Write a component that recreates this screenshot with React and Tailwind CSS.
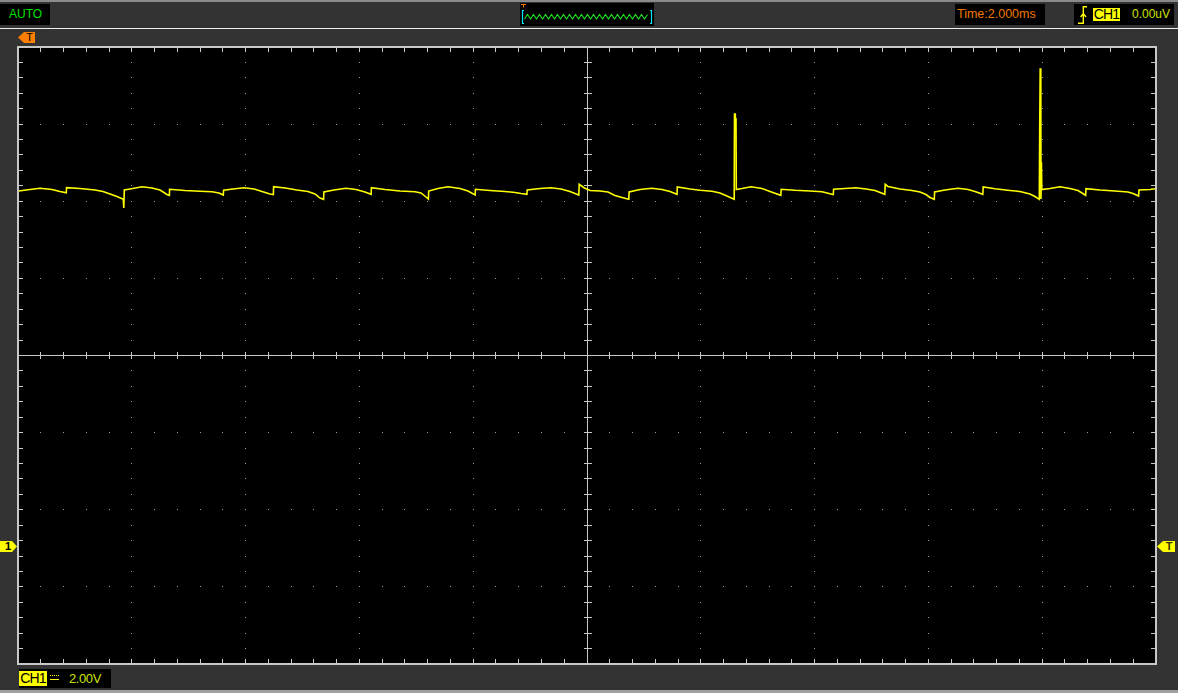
const X0 = 18;
const X1 = 1156;
const Y0 = 47;
const Y1 = 664;
const DX = (X1 - X0) / 10;
const DY = (Y1 - Y0) / 8;
const CX = 587.5;
const CY = 355.5;
const snap = (v) => Math.floor(v) + 0.5;

function buildGrid() {
  let dots = "";
  let ticks = "";
  for (let i = 1; i < 50; i++) {
    const x = snap(X0 + (i * DX) / 5);
    ticks += `M${x} 48v4M${x} 663v-4M${x} ${CY - 3.5}v7`;
    for (let k = 1; k < 8; k++) {
      if (k === 4) continue;
      const y = Math.floor(Y0 + k * DY);
      dots += `M${x - 0.5} ${y}h1v1h-1z`;
    }
  }
  for (let j = 1; j < 40; j++) {
    const y = snap(Y0 + (j * DY) / 5);
    ticks += `M19 ${y}h4M1155 ${y}h-4M${CX - 4} ${y}h8`;
    for (let k = 1; k < 10; k++) {
      if (k === 5) continue;
      const x = Math.floor(X0 + k * DX);
      dots += `M${x} ${y - 0.5}h1v1h-1z`;
    }
  }
  return { dots, ticks };
}

const grid = buildGrid();

// channel 1 trace, page coordinates
const trace = [
  [19, 191], [26, 190], [40, 188.3], [52, 189.5], [60, 191.5], [66.3, 192.7], [66.5, 187.7],
  [80, 188.5], [95, 190], [103, 191.5], [110, 194], [117, 196.5], [123.3, 199.3], [123.8, 208],
  [124.3, 190], [130, 189], [142, 186.7], [152, 188], [160, 190], [167, 194.5], [169.4, 195.3],
  [169.6, 189.3], [185, 190.5], [200, 191.3], [212, 191.8], [219, 193], [223.3, 195], [223.6, 190.3],
  [233, 189], [244, 187.7], [254, 189], [262, 191.5], [270, 194], [273.4, 194.5], [273.6, 186.7],
  [285, 188], [297, 190], [308, 191.5], [315, 194], [320, 198], [323.6, 199.3], [323.9, 192],
  [334, 190], [346, 188.3], [356, 189.5], [365, 192], [371.1, 194.3], [371.4, 187.7], [385, 189.5],
  [400, 191], [415, 191.8], [421, 193], [426, 197], [428.4, 199], [428.7, 191], [438, 188.5],
  [448, 186.7], [460, 188.5], [468, 191], [475.1, 195], [475.4, 189.3], [490, 190.5], [505, 191.5],
  [515, 192.5], [521, 193.5], [526.9, 194.3], [527.2, 190], [540, 188.5], [551, 187.7], [561, 189],
  [570, 191.5], [578.8, 195], [579.2, 184.3], [584, 187.7], [590, 190.5], [600, 191], [608, 192],
  [615, 195.5], [622, 197.5], [628.8, 199.3], [629.1, 192], [640, 189.5], [651.7, 188.3], [662, 189.5],
  [670, 191.5], [677, 194.3], [677.3, 187], [690, 189], [700, 190.2], [712, 191.3], [720, 193],
  [728, 196.5], [734.2, 199.3], [734.5, 114], [735.3, 114], [735.6, 126], [736, 118], [736.3, 189.5],
  [742, 188.5], [751, 186.7], [762, 188.5], [770, 191.5], [780.8, 195.3], [781.2, 189.3], [795, 190.3],
  [810, 191], [822, 191.8], [832, 194.3], [833.3, 194.5], [833.6, 189.3], [845, 188.5], [856, 187.7],
  [866, 189], [875, 190.5], [884.8, 194.3], [885.2, 184.3], [888, 186.5], [900, 189], [912, 190.5],
  [920, 192], [926, 194.5], [930, 197.5], [934.3, 199.3], [934.6, 192], [945, 190], [958, 188.3],
  [968, 189.5], [975, 191.5], [982.8, 194.3], [983.2, 187], [995, 188.8], [1010, 190.5], [1020, 191.5],
  [1030, 194], [1035, 196.5], [1039.3, 199.3], [1039.7, 130], [1040.2, 69], [1040.8, 69], [1041, 199],
  [1041.4, 162], [1041.8, 189.5], [1050, 188.5], [1060, 186.7], [1070, 188.5], [1078, 190.5],
  [1085.6, 195.3], [1086, 188.7], [1100, 190], [1115, 191], [1128, 192], [1133, 193.5], [1138.6, 196],
  [1139, 190], [1150, 189.5], [1155, 188.7],
];

const zigzag = (() => {
  const pts = [];
  for (let x = 4.5, n = 0; x <= 129; x += 3, n++) {
    pts.push(`${x},${n % 2 === 0 ? 16 : 11.5}`);
  }
  return pts.join(" ");
})();

function WaveThumb() {
  return (
    <svg width="134" height="23" viewBox="0 0 134 23">
      <path d="M1 1.5h5M3.5 1.5v3" stroke="#ff8000" strokeWidth="1" fill="none" />
      <path d="M4 7.5H2.5V20.5H4M130 7.5H131.5V20.5H130" stroke="#00e8ff" strokeWidth="1.2" fill="none" />
      <polyline points={zigzag} stroke="#22e022" strokeWidth="1.1" fill="none" />
    </svg>
  );
}

function Scope() {
  return (
    <svg width="1141" height="620" viewBox="17 46 1141 620" className="block shrink-0">
      <rect x="18" y="47" width="1138" height="617" fill="#000" stroke="#c8c8c8" strokeWidth="2" />
      <path d={grid.dots} fill="#9c9c9c" shapeRendering="crispEdges" />
      <path
        d={`M${CX} 48V663M19 ${CY}H1155`}
        stroke="#c8c8c8"
        strokeWidth="1"
        fill="none"
        shapeRendering="crispEdges"
      />
      <path d={grid.ticks} stroke="#c8c8c8" strokeWidth="1" fill="none" shapeRendering="crispEdges" />
      <polyline
        points={trace.map((p) => p.join(",")).join(" ")}
        fill="none"
        stroke="#ffff00"
        strokeWidth="1.6"
        strokeLinejoin="miter"
      />
    </svg>
  );
}

export default function App() {
  return (
    <div className="w-[1178px] h-[693px] bg-[#333333] flex flex-col overflow-hidden font-['Liberation_Sans',Arial,sans-serif]">
      <div className="h-[2px] bg-[#8a8a8a]" />

      <div className="h-[26px] flex items-start">
        <div className="mt-[2px] w-[50px] h-[21px] bg-black text-[#00e000] text-[12px] leading-[21px] pl-[9px]">
          AUTO
        </div>
        <div className="ml-[470px] mt-[1px] w-[134px] h-[23px] bg-black">
          <WaveThumb />
        </div>
        <div className="ml-auto mt-[2px] w-[90px] h-[21px] bg-black text-[#f07800] text-[12.5px] leading-[21px] pl-[2px] whitespace-nowrap">
          Time:2.000ms
        </div>
        <div className="ml-[29px] mr-[4px] mt-[2px] w-[100px] h-[21px] bg-black flex items-center">
          <svg width="12" height="21" viewBox="0 0 12 21" className="ml-[3px] shrink-0">
            <path d="M1 19.3H6.3V2.7H10M3.6 13L6.3 9.6L9 13" stroke="#ffff00" strokeWidth="1.4" fill="none" />
          </svg>
          <div className="ml-[4px] w-[27px] h-[13px] bg-[#ffff00] text-black text-[14px] leading-[13px] tracking-[-0.8px] text-center">
            CH1
          </div>
          <div className="ml-[12px] text-[#cce000] text-[12px] leading-[21px]">0.00uV</div>
        </div>
      </div>

      <div className="h-[1px] bg-[#f0f0f0]" />

      <div className="h-[17px] pl-[18px] pt-[3px]">
        <div className="w-[17px] h-[11px] bg-[#ff8000] [clip-path:polygon(0_50%,6px_0,100%_0,100%_100%,6px_100%)] pl-[6px] flex items-center justify-center text-black text-[11px] leading-[11px]">
          T
        </div>
      </div>

      <div className="h-[620px] flex">
        <div className="w-[17px] shrink-0">
          <div className="mt-[495px] w-[17px] h-[11px] bg-[#ffff00] [clip-path:polygon(0_0,12px_0,100%_50%,12px_100%,0_100%)] pl-[5px] text-black text-[11px] leading-[11px] font-bold">
            1
          </div>
        </div>
        <Scope />
        <div className="w-[20px] shrink-0">
          <div className="mt-[495px] ml-[-1px] w-[18px] h-[11px] bg-[#ffff00] [clip-path:polygon(0_50%,6px_0,100%_0,100%_100%,6px_100%)] pl-[6px] flex items-center justify-center text-[#333300] text-[11px] leading-[11px] font-bold">
            T
          </div>
        </div>
      </div>

      <div className="h-[24px] pl-[19px] pt-[3px]">
        <div className="w-[92px] h-[19px] bg-black flex items-center">
          <div className="w-[28px] h-[15px] bg-[#ffff00] text-black text-[14px] leading-[15px] tracking-[-0.8px] text-center">
            CH1
          </div>
          <svg width="11" height="19" viewBox="0 0 11 19" className="ml-[2px] shrink-0">
            <path d="M1 6.5h9" stroke="#ffff00" strokeWidth="1" strokeDasharray="1 1" fill="none" />
            <path d="M1 10.5h9" stroke="#ffff00" strokeWidth="1" fill="none" />
          </svg>
          <div className="ml-[9px] text-[#cce000] text-[13px] leading-[19px] tracking-[-0.4px]">2.00V</div>
        </div>
      </div>

      <div className="flex-1 bg-[#a0a0a0]" />
    </div>
  );
}
